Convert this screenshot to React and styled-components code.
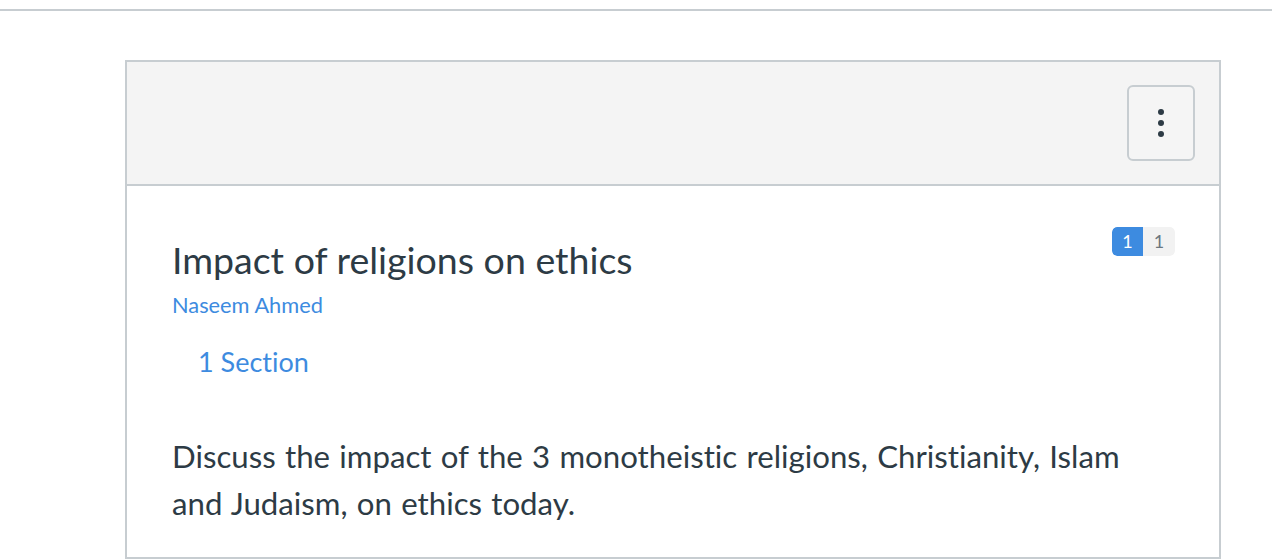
import React from "react";
import styled, { createGlobalStyle } from "styled-components";

const Global = createGlobalStyle`
  html, body { margin: 0; padding: 0; background: #fff; }
  body {
    font-family: Lato, "Liberation Sans", sans-serif;
    color: #2d3b45;
    font-variant-ligatures: none;
    font-feature-settings: "liga" 0, "clig" 0;
  }
`;

const Page = styled.div`
  width: 1272px;
  height: 560px;
  overflow: hidden;
  padding-top: 9px;
  box-sizing: border-box;
`;

const TopRule = styled.div`
  height: 2px;
  background: #c7cdd1;
`;

const Card = styled.section`
  margin: 49px 0 0 125px;
  width: 1096px;
  border: 2px solid #c7cdd1;
  box-sizing: border-box;
`;

const Header = styled.div`
  height: 124px;
  background: #f4f4f4;
  border-bottom: 2px solid #c7cdd1;
  display: flex;
  align-items: flex-start;
  justify-content: flex-end;
  padding: 23px 24px 0 0;
  box-sizing: border-box;
`;

const KebabButton = styled.button`
  width: 68px;
  height: 76px;
  border: 2px solid #c7cdd1;
  border-radius: 6px;
  background: #f5f5f5;
  display: flex;
  flex-direction: column;
  align-items: center;
  justify-content: center;
  gap: 5px;
  padding: 0;
  cursor: pointer;
`;

const Dot = styled.span`
  width: 6px;
  height: 6px;
  border-radius: 50%;
  background: #2d3b45;
`;

const Body = styled.div`
  padding: 41px 44px 30px 45px;
  display: flex;
  flex-direction: column;
`;

const TitleRow = styled.div`
  display: flex;
  justify-content: space-between;
  align-items: flex-start;
`;

const Title = styled.h2`
  margin: 10px 0 0;
  font-weight: 400;
  font-size: 37.5px;
  line-height: 46px;
  color: #2d3b45;
`;

const Badge = styled.div`
  display: flex;
  height: 29px;
  border-radius: 5px;
  overflow: hidden;
  font-size: 18px;
  line-height: 29px;
`;

const BadgePart = styled.span`
  width: ${(p) => (p.$unread ? "31px" : "32px")};
  text-align: center;
  background: ${(p) => (p.$unread ? "#3d8be0" : "#f2f2f2")};
  color: ${(p) => (p.$unread ? "#ffffff" : "#6b7780")};
  border-radius: ${(p) => (p.$unread ? "5px 0 0 5px" : "0 5px 5px 0")};
`;

const Author = styled.a`
  margin-top: 8px;
  font-size: 21.8px;
  line-height: 28px;
  color: #3d8be0;
  text-decoration: none;
  align-self: flex-start;
`;

const Sections = styled.a`
  margin: 25px 0 0 26px;
  font-size: 27px;
  line-height: 36px;
  color: #3d8be0;
  text-decoration: none;
  align-self: flex-start;
`;

const Message = styled.p`
  margin: 53px 0 0;
  font-size: 31.2px;
  word-spacing: 1.3px;
  line-height: 47px;
  color: #2d3b45;
  max-width: 960px;
`;

export default function App() {
  return (
    <Page>
      <Global />
      <TopRule />
      <Card>
        <Header>
          <KebabButton aria-label="More options">
            <Dot />
            <Dot />
            <Dot />
          </KebabButton>
        </Header>
        <Body>
          <TitleRow>
            <Title>Impact of religions on ethics</Title>
            <Badge>
              <BadgePart $unread>1</BadgePart>
              <BadgePart>1</BadgePart>
            </Badge>
          </TitleRow>
          <Author href="#">Naseem Ahmed</Author>
          <Sections href="#">1 Section</Sections>
          <Message>
            Discuss the impact of the 3 monotheistic religions, Christianity, Islam and Judaism, on ethics today.
          </Message>
        </Body>
      </Card>
    </Page>
  );
}
